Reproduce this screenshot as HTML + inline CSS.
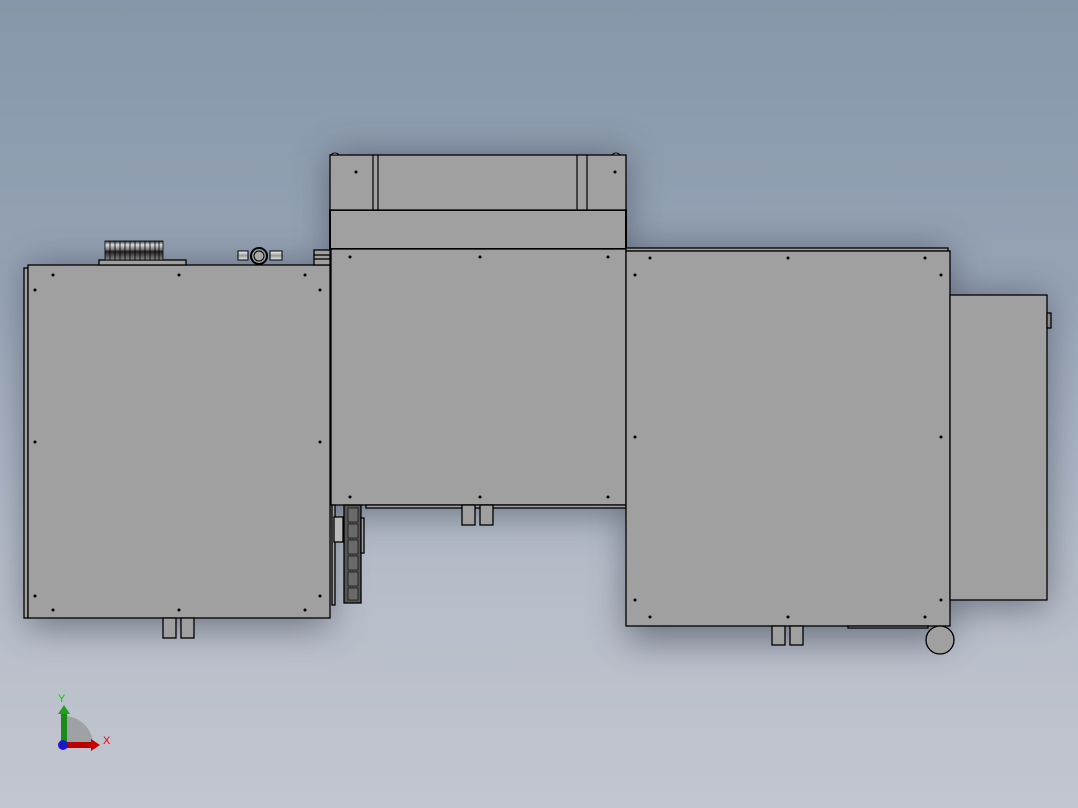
<!DOCTYPE html>
<html><head><style>
html,body{margin:0;padding:0;width:1078px;height:808px;overflow:hidden;}
body{background:linear-gradient(180deg,#8796aa 0%,#96a3b5 35%,#b5bcc8 70%,#c2c6cf 100%);}
svg{position:absolute;left:0;top:0;}
</style></head><body>
<svg width="1078" height="808" viewBox="0 0 1078 808" xmlns="http://www.w3.org/2000/svg">
<defs>
<filter id="sh" x="-20%" y="-20%" width="140%" height="140%"><feGaussianBlur stdDeviation="18"/></filter>
<linearGradient id="cyl" x1="0" y1="0" x2="0" y2="1"><stop offset="0" stop-color="#fff"/><stop offset="0.5" stop-color="#999"/><stop offset="1" stop-color="#eee"/></linearGradient>
<linearGradient id="tb" x1="0" y1="0" x2="0" y2="1"><stop offset="0" stop-color="#333"/><stop offset="0.2" stop-color="#ddd"/><stop offset="0.45" stop-color="#777"/><stop offset="0.55" stop-color="#222"/><stop offset="1" stop-color="#888"/></linearGradient>
</defs>
<g filter="url(#sh)" fill="#3e4552" opacity="0.6">
<rect x="27" y="265" width="303" height="362"/>
<rect x="330" y="155" width="296" height="358"/>
<rect x="626" y="249" width="324" height="392"/>
<rect x="950" y="295" width="97" height="312"/>
</g>
<g stroke="#000" stroke-width="1.3" fill="#a0a0a0">
<rect x="24" y="268" width="4" height="350"/>
<rect x="28" y="265" width="302" height="353"/>
<rect x="99" y="260" width="87" height="5"/>
<rect x="330" y="210" width="296" height="39" stroke-width="2"/>
<rect x="331" y="249" width="295" height="256"/>
<rect x="366" y="505" width="260" height="3"/>
<rect x="314" y="250" width="16" height="15"/>
<line x1="314" y1="255" x2="330" y2="255"/><line x1="314" y1="259" x2="330" y2="259"/>
<rect x="626" y="248" width="322" height="3"/>
<rect x="626" y="251" width="324" height="375"/>
<rect x="950" y="295" width="97" height="305"/>
<rect x="1047" y="313" width="4" height="15" fill="#888"/>
<rect x="848" y="626" width="80" height="2"/>
<rect x="332" y="505" width="3" height="100"/>
<rect x="334" y="517" width="9" height="25" fill="#bbb"/>
<rect x="344" y="505" width="17" height="98" fill="#555"/>
<rect x="361" y="518" width="3" height="35"/>
<rect x="163" y="618" width="13" height="20"/><rect x="181" y="618" width="13" height="20"/>
<rect x="462" y="505" width="13" height="20"/><rect x="480" y="505" width="13" height="20"/>
<rect x="772" y="626" width="13" height="19"/><rect x="790" y="626" width="13" height="19"/>
<circle cx="940" cy="640" r="14"/>
</g>
<g stroke="#000" stroke-width="0.6" fill="#6a6a6a">
<rect x="348" y="508" width="10" height="14"/><rect x="348" y="524" width="10" height="14"/><rect x="348" y="540" width="10" height="14"/><rect x="348" y="556" width="10" height="14"/><rect x="348" y="572" width="10" height="14"/><rect x="348" y="588" width="10" height="12"/>
</g>
<rect x="105" y="241" width="58" height="19" fill="url(#tb)" stroke="#000" stroke-width="0.8"/>
<g stroke="#000" stroke-width="0.8">
<line x1="110" y1="241" x2="110" y2="260"/><line x1="115" y1="241" x2="115" y2="260"/><line x1="120" y1="241" x2="120" y2="260"/><line x1="125" y1="241" x2="125" y2="260"/><line x1="130" y1="241" x2="130" y2="260"/><line x1="135" y1="241" x2="135" y2="260"/><line x1="140" y1="241" x2="140" y2="260"/><line x1="145" y1="241" x2="145" y2="260"/><line x1="150" y1="241" x2="150" y2="260"/><line x1="155" y1="241" x2="155" y2="260"/><line x1="159" y1="241" x2="159" y2="260"/>
</g>
<g stroke="#000" stroke-width="1" fill="url(#cyl)">
<rect x="238" y="251" width="10" height="9"/><rect x="270" y="251" width="12" height="9"/>
</g>
<circle cx="259" cy="256" r="8" fill="#999" stroke="#000" stroke-width="2"/>
<circle cx="259" cy="256" r="5" fill="#aaa" stroke="#000"/>
<circle cx="335" cy="158" r="5" fill="#ddd" stroke="#000"/>
<circle cx="616" cy="158" r="5" fill="#ddd" stroke="#000"/>
<rect x="330" y="155" width="296" height="55" fill="#a0a0a0" stroke="#000" stroke-width="1.3"/>
<g stroke="#000" stroke-width="1.2"><line x1="373" y1="155" x2="373" y2="210"/><line x1="378" y1="155" x2="378" y2="210"/><line x1="577" y1="155" x2="577" y2="210"/><line x1="587" y1="155" x2="587" y2="210"/></g>
<g fill="#000">
<circle cx="53" cy="275" r="1.5"/><circle cx="179" cy="275" r="1.5"/><circle cx="305" cy="275" r="1.5"/>
<circle cx="35" cy="290" r="1.5"/><circle cx="320" cy="290" r="1.5"/>
<circle cx="35" cy="442" r="1.5"/><circle cx="320" cy="442" r="1.5"/>
<circle cx="35" cy="596" r="1.5"/><circle cx="320" cy="596" r="1.5"/>
<circle cx="53" cy="610" r="1.5"/><circle cx="179" cy="610" r="1.5"/><circle cx="305" cy="610" r="1.5"/>
<circle cx="350" cy="257" r="1.5"/><circle cx="480" cy="257" r="1.5"/><circle cx="608" cy="257" r="1.5"/>
<circle cx="350" cy="497" r="1.5"/><circle cx="480" cy="497" r="1.5"/><circle cx="608" cy="497" r="1.5"/>
<circle cx="356" cy="172" r="1.5"/><circle cx="615" cy="172" r="1.5"/>
<circle cx="650" cy="258" r="1.5"/><circle cx="788" cy="258" r="1.5"/><circle cx="925" cy="258" r="1.5"/>
<circle cx="635" cy="275" r="1.5"/><circle cx="941" cy="275" r="1.5"/>
<circle cx="635" cy="437" r="1.5"/><circle cx="941" cy="437" r="1.5"/>
<circle cx="635" cy="600" r="1.5"/><circle cx="941" cy="600" r="1.5"/>
<circle cx="650" cy="617" r="1.5"/><circle cx="788" cy="617" r="1.5"/><circle cx="925" cy="617" r="1.5"/>
</g>
<path d="M64 745 L64 716 A29 29 0 0 1 93 745 Z" fill="#8a8a8a" opacity="0.6"/>
<rect x="61" y="712" width="6" height="33" fill="#1a8a1a"/>
<polygon points="58,714 64,705 70,714" fill="#1fa01f"/>
<rect x="64" y="742" width="28" height="6" fill="#b00"/>
<polygon points="91,739 100,745 91,751" fill="#c00"/>
<circle cx="63" cy="745" r="5" fill="#1a1acc"/>
<text x="58" y="702" font-family="Liberation Sans, sans-serif" font-size="11" fill="#0c0">Y</text>
<text x="103" y="744" font-family="Liberation Sans, sans-serif" font-size="11" fill="#e00">X</text>
</svg>
</body></html>
